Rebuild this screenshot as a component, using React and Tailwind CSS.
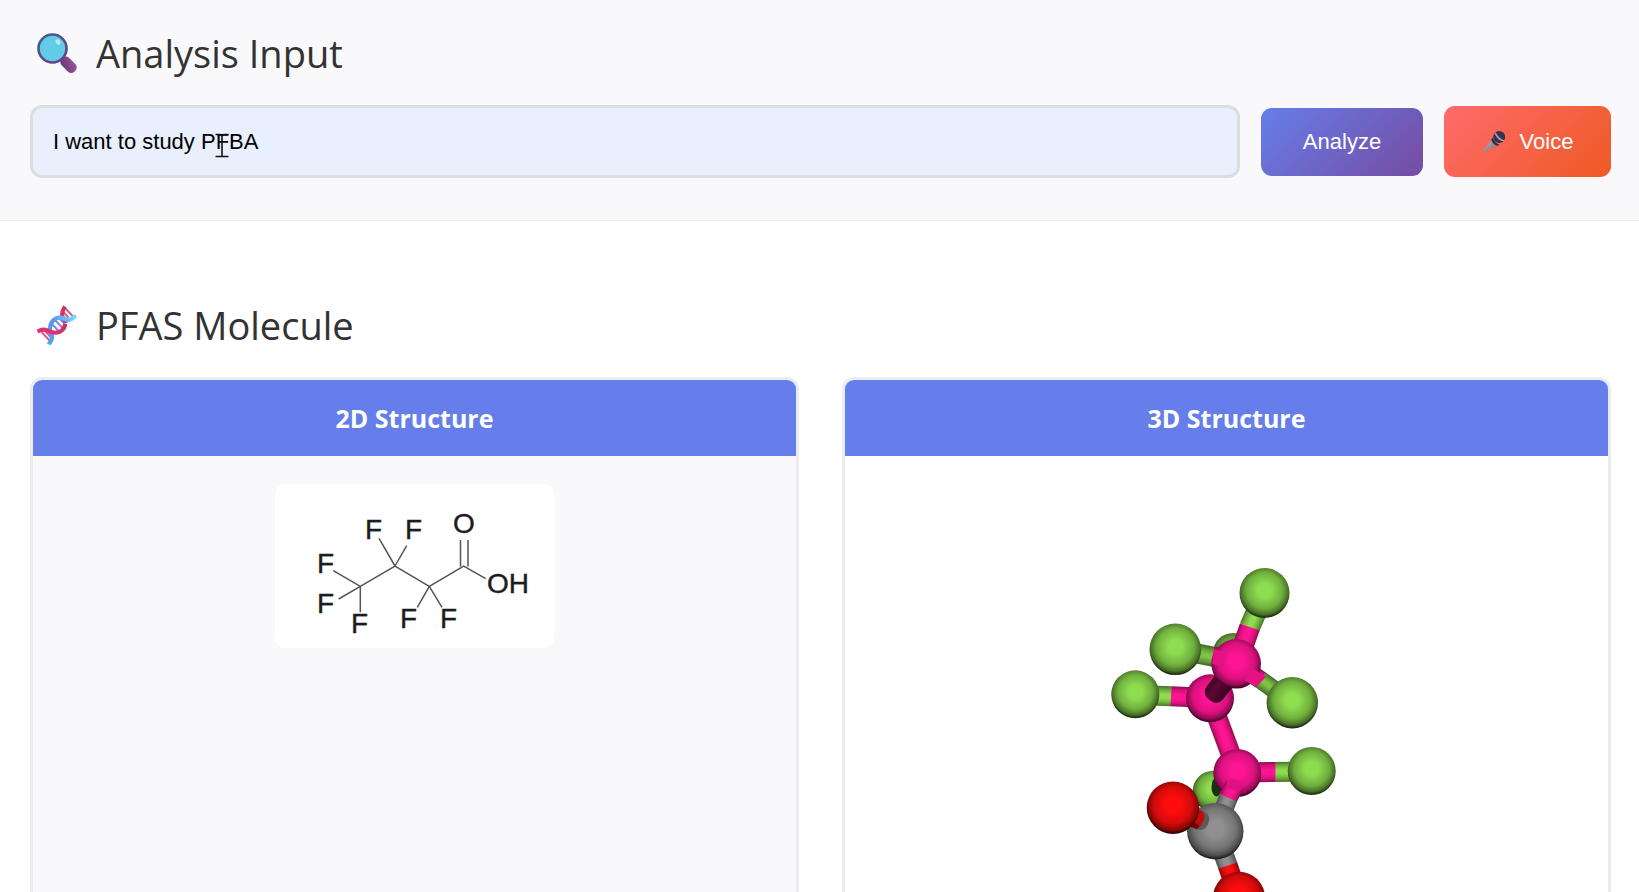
import React from "react";

const PALETTE = {
  green: ["#8edc4f", "#70b03e", "#487128", "#141f0b"],
  dimGreen: ["#7cc245", "#639737", "#416524", "#141f0b"],
  pink: ["#ff1493", "#dc117e", "#900b53", "#2a0318"],
  red: ["#ff0d0d", "#d20b0b", "#850707", "#220202"],
  gray: ["#909090", "#757575", "#4e4e4e", "#141414"],
};

function Defs() {
  return (
    <defs>
      {Object.entries(PALETTE).map(([name, [light, mid, low, dark]]) => (
        <React.Fragment key={name}>
          <radialGradient id={`ball-${name}`} cx="0.5" cy="0.45" r="0.55">
            <stop offset="0" stopColor={light} />
            <stop offset="0.25" stopColor={light} />
            <stop offset="0.65" stopColor={mid} />
            <stop offset="0.87" stopColor={low} />
            <stop offset="1" stopColor={dark} />
          </radialGradient>
          <linearGradient id={`rod-${name}`} x1="0" y1="0" x2="0" y2="1">
            <stop offset="0" stopColor={low} />
            <stop offset="0.2" stopColor={mid} />
            <stop offset="0.42" stopColor={light} />
            <stop offset="0.6" stopColor={light} />
            <stop offset="0.82" stopColor={mid} />
            <stop offset="1" stopColor={low} />
          </linearGradient>
        </React.Fragment>
      ))}
      <linearGradient id="shadow-rod" x1="0" y1="0" x2="0" y2="1">
        <stop offset="0" stopColor="#3a0320" />
        <stop offset="0.6" stopColor="#5c0735" />
        <stop offset="1" stopColor="#3f0424" />
      </linearGradient>
    </defs>
  );
}

function Ball({ x, y, r, tone }) {
  return <circle cx={x} cy={y} r={r} fill={`url(#ball-${tone})`} />;
}

// Two-toned cylinder from one atom to the next, changing tone at the split point.
function Rod({ from, split, to, tones, width = 20 }) {
  const parts = split ? [[from, split, tones[0]], [split, to, tones[1]]] : [[from, to, tones[0]]];
  return parts.map(([a, b, tone], i) => {
    const length = Math.hypot(b[0] - a[0], b[1] - a[1]);
    const angle = (Math.atan2(b[1] - a[1], b[0] - a[0]) * 180) / Math.PI;
    return (
      <g key={i} transform={`translate(${a[0]} ${a[1]}) rotate(${angle})`}>
        <rect x="0" y={-width / 2} width={length + 0.4} height={width} fill={`url(#rod-${tone})`} />
      </g>
    );
  });
}

function Molecule3D() {
  return (
    <svg width="260" height="480" viewBox="1097 456 260 480" role="img" aria-label="3D ball-and-stick model">
      <Defs />
      <Ball x={1233} y={653} r={20} tone="dimGreen" />
      <Rod from={[1264.5, 593]} split={[1249.8, 627]} to={[1236.7, 663.8]} tones={["green", "pink"]} width={21} />
      <Ball x={1264.5} y={593} r={25} tone="green" />

      <Rod from={[1210, 698]} to={[1237.7, 773]} tones={["pink"]} />
      <Rod from={[1135, 695]} split={[1171, 696.3]} to={[1210, 698]} tones={["green", "pink"]} />
      <Ball x={1135.3} y={694.3} r={24} tone="green" />
      <Ball x={1210} y={698.3} r={24} tone="pink" />
      <g transform="translate(1238 664) rotate(128)">
        <rect x="0" y="-10" width="46" height="21" rx="9" fill="url(#shadow-rod)" />
      </g>

      <Rod from={[1175.3, 649.3]} split={[1212.5, 656.5]} to={[1236.7, 661]} tones={["dimGreen", "pink"]} width={20} />
      <Ball x={1175.3} y={649.3} r={25.8} tone="green" />
      <Rod from={[1292.3, 702.7]} split={[1260.8, 680]} to={[1236.7, 663.8]} tones={["dimGreen", "pink"]} width={18} />
      <Ball x={1236.2} y={663.8} r={24.8} tone="pink" />
      <path d="M1253 668.500 1266 677 1256 687 1244 680Z" fill="#e61285" />
      <path d="M1226 652.500 1214 649.500 1212 664 1223 666Z" fill="#e61285" />
      <Ball x={1292.3} y={702.7} r={25.7} tone="green" />

      <Ball x={1213} y={791} r={20.3} tone="green" />
      <ellipse cx="1216.500" cy="787" rx="5" ry="9.500" fill="#1d3010" />
      <Rod from={[1311, 771.5]} split={[1275.5, 772]} to={[1237.7, 772.5]} tones={["green", "pink"]} />
      <Ball x={1311.7} y={771} r={24} tone="green" />
      <Ball x={1237.3} y={773} r={24} tone="pink" />
      <Rod from={[1234.5, 785]} split={[1228.3, 797.7]} to={[1215.3, 831.3]} tones={["pink", "gray"]} width={19} />
      <ellipse cx="1234.500" cy="785" rx="8.500" ry="5" fill="#de1180" transform="rotate(22 1234.500 785)" />

      <Rod from={[1215.3, 831.3]} split={[1227.7, 865.5]} to={[1239, 898]} tones={["gray", "red"]} />
      <Ball x={1215.3} y={831.3} r={28.2} tone="gray" />
      <Ball x={1239} y={897.7} r={26} tone="red" />
      <g transform="translate(1173 807.7) rotate(22)">
        <rect x="0" y="-8" width="38.500" height="19" rx="8" fill="#5a5a5a" />
        <rect x="0" y="-8" width="33" height="19" rx="7" fill="#c50a0a" />
        <rect x="0" y="6" width="31" height="5" rx="2" fill="#6d0505" />
      </g>
      <Ball x={1173} y={807.7} r={26.3} tone="red" />
    </svg>
  );
}

function Structure2D() {
  const atoms = [
    ["F", 90, 55], ["F", 130, 55], ["O", 178, 49], ["F", 42, 89], ["F", 42, 129],
    ["F", 76, 149], ["F", 125, 144], ["F", 165, 144], ["OH", 212, 109],
  ];
  return (
    <svg width="279" height="164" viewBox="0 0 279 164" className="rounded-[10px] bg-white" role="img" aria-label="Skeletal formula">
      <path
        fill="none"
        stroke="#555"
        strokeWidth="1.5"
        d="M85.3 102.3 120 82l34.3 20.3L188.7 82l22 12.7M120 82l-16-27.7M120 82l11.7-20.3M85.3 102.3l-27-15.6M85.3 102.3 63.7 115M85.3 102.3v26M154.3 102.3l-12 21M154.3 102.3l12.7 21M185.5 82.5V56M193 82.5V56"
      />
      {atoms.map(([label, x, y], i) => (
        <text
          key={i}
          x={x}
          y={y}
          fontSize="28"
          fontFamily="'Liberation Sans', Arial, sans-serif"
          fill="#1c1c1c"
          stroke="#1c1c1c"
          strokeWidth="0.4"
        >
          {label}
        </text>
      ))}
    </svg>
  );
}

function MagnifierIcon() {
  return (
    <svg className="size-10" viewBox="0 0 40 40" aria-hidden="true">
      <defs>
        <linearGradient id="lens-rim" x1="0" y1="0" x2="0.6" y2="1">
          <stop offset="0" stopColor="#3d6290" />
          <stop offset="1" stopColor="#66408c" />
        </linearGradient>
        <linearGradient id="lens-handle" x1="0" y1="1" x2="1" y2="0">
          <stop offset="0" stopColor="#67337a" />
          <stop offset="1" stopColor="#9a5a9c" />
        </linearGradient>
      </defs>
      <path d="m25 26 3 3" stroke="#574a80" strokeWidth="4" />
      <rect x="22.500" y="26.500" width="18" height="10.500" rx="4.500" fill="url(#lens-handle)" transform="rotate(45 31.500 31.800)" />
      <circle cx="15.5" cy="15.5" r="14" fill="#62cbe8" stroke="url(#lens-rim)" strokeWidth="2.6" />
      <ellipse cx="21" cy="9" rx="2.2" ry="2.8" fill="#b5e6f5" transform="rotate(-40 21 9)" />
    </svg>
  );
}

function DnaIcon() {
  return (
    <svg className="size-10" viewBox="0 0 40 40" fill="none" aria-hidden="true">
      <defs>
        <linearGradient id="dna-blue" x1="0" y1="1" x2="1" y2="0">
          <stop offset="0" stopColor="#48a8f5" />
          <stop offset="0.5" stopColor="#5596ee" />
          <stop offset="1" stopColor="#74e4ff" />
        </linearGradient>
        <linearGradient id="dna-red" x1="0" y1="1" x2="1" y2="0">
          <stop offset="0" stopColor="#ec2d7d" />
          <stop offset="1" stopColor="#b93857" />
        </linearGradient>
      </defs>
      <path d="m4.500 27 8.500 9M9 27l5.500 6" stroke="#e35c96" strokeWidth="2" />
      <path d="M14 18l9 9.500M18 15l9 9.500M22 13l6.500 7" stroke="#8b86dc" strokeWidth="2" />
      <path d="m25.500 6 6 6.500M28 3l8 8.500" stroke="#d45d82" strokeWidth="2" />
      <path d="M28.500 18c0-3-3.500-5-3.500-8.500 0-3 .8-5 3-8" stroke="url(#dna-red)" strokeWidth="4" />
      <path d="M12 39.500c1-3 3.500-4.500 3-8-.4-3-2.500-5-2-9 .5-5 4-9.500 9-10 4-.3 6 2.500 9 2.300 3-.2 5.500-1.800 8-4.300" stroke="url(#dna-blue)" strokeWidth="4.200" />
      <path d="M.5 26.500c3.500-2 6.500-2.500 9.500-1s5.500 2.500 9 2.200c5-.4 9-4 9-8.700" stroke="url(#dna-red)" strokeWidth="4.200" />
    </svg>
  );
}

function MicIcon() {
  return (
    <svg className="size-6" viewBox="0 0 24 24" aria-hidden="true">
      <defs>
        <linearGradient id="mic-body" x1="0" y1="0" x2="1" y2="1">
          <stop offset="0" stopColor="#c4b3b5" />
          <stop offset="1" stopColor="#7b6d73" />
        </linearGradient>
      </defs>
      <path d="M11 8 .9 20.300c-.6.8.8 2.200 1.700 1.600L17 14.500Z" fill="url(#mic-body)" />
      <circle cx="17.200" cy="7" r="6" fill="#3a3148" />
      <path d="M10.800 7.500c1 3.500 3.500 6.500 7 7l-2.500 1.300c-3-.8-5.300-3.300-6.100-6.400Z" fill="#302b55" />
      <path d="M13.200 2.900c1.500 3.800 4.500 6.800 8.700 8" stroke="#aaa2b6" strokeWidth="1.500" fill="none" />
    </svg>
  );
}

function SectionHeading({ icon, children }) {
  return (
    <h2 className="flex items-center gap-[19px] px-[7px] text-[38px] leading-[56px] text-[#333]">
      {icon}
      {children}
    </h2>
  );
}

function StructureCard({ title, tint, children }) {
  return (
    <article className={`flex-1 overflow-hidden rounded-xl border-[3px] border-[#ebecef] ${tint}`}>
      <h3 className="bg-[#667eea] py-5 text-center text-[25px] leading-9 font-bold text-white">{title}</h3>
      <div className="flex min-h-[480px] items-start justify-center">{children}</div>
    </article>
  );
}

export default function App() {
  return (
    <div className="h-screen overflow-hidden bg-white font-['Segoe_UI','Open_Sans',sans-serif]">
      <section className="border-b border-[#ececee] bg-[#f9f9fc] pt-[25px] pr-7 pb-[42px] pl-[30px]">
        <SectionHeading icon={<MagnifierIcon />}>Analysis Input</SectionHeading>
        <form className="mt-6 flex items-center gap-[21px] font-['Liberation_Sans',Arial,sans-serif] text-[22px]" onSubmit={(e) => e.preventDefault()}>
          <div className="relative flex-1">
            <input
              type="text"
              aria-label="Analysis request"
              defaultValue="I want to study PFBA"
              className="block h-[73px] w-full rounded-xl border-[3px] border-[#dddddf] bg-[#e8effd] px-5 text-black outline-none"
            />
            <svg className="pointer-events-none absolute top-7 left-[185px]" width="14" height="25" viewBox="0 0 14 25" aria-hidden="true">
              <path d="M.5 1.500h4.500l2 1.200 2-1.200h4.500M7 2.500v21M.5 23.500h13" stroke="#111" strokeWidth="1.600" fill="none" />
            </svg>
          </div>
          <button type="submit" className="h-[68px] w-[162px] rounded-[11px] bg-[linear-gradient(135deg,#667eea,#764ba2)] text-white">
            Analyze
          </button>
          <button type="button" className="flex h-[71px] w-[167px] items-center justify-center gap-[14px] rounded-[11px] bg-[linear-gradient(135deg,#ff6b6b,#ee5a24)] text-white">
            <MicIcon />
            Voice
          </button>
        </form>
      </section>

      <section className="pt-[76px] pr-7 pl-[30px]">
        <SectionHeading icon={<DnaIcon />}>PFAS Molecule</SectionHeading>
        <div className="mt-6 flex gap-[43px]">
          <StructureCard title="2D Structure" tint="bg-[#f9f9fc]">
            <div className="pt-7">
              <Structure2D />
            </div>
          </StructureCard>
          <StructureCard title="3D Structure" tint="bg-white">
            <Molecule3D />
          </StructureCard>
        </div>
      </section>
    </div>
  );
}
